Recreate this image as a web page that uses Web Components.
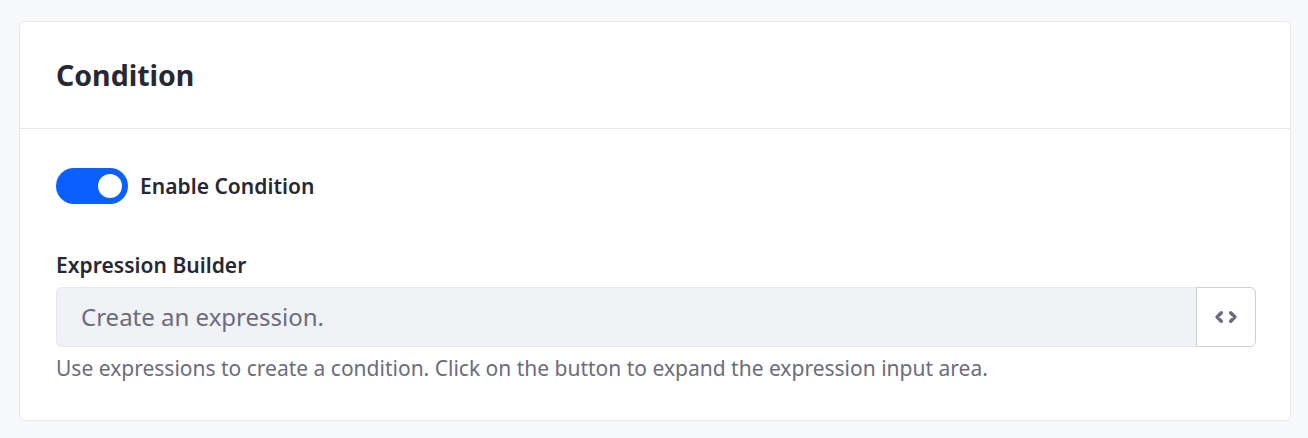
<!DOCTYPE html>
<html lang="en"><head><meta charset="utf-8"><title>Condition</title>
<style>
body{margin:0;background:#f7f8fa;font-family:"Noto Sans","Open Sans",sans-serif;color:#272833;height:438px;overflow:hidden}
</style></head><body>
<condition-panel>
<span slot="title">Condition</span>
<toggle-switch>Enable Condition</toggle-switch>
<expression-field><span slot="label">Expression Builder</span><span slot="placeholder">Create an expression.</span><span slot="help">Use expressions to create a condition. Click on the button to expand the expression input area.</span></expression-field>
</condition-panel>
<script>
const define=(name,markup)=>customElements.define(name,class extends HTMLElement{
constructor(){super();this.attachShadow({mode:"open"}).innerHTML=markup;}
});
define("condition-panel",`<style>
:host{display:block;box-sizing:border-box;padding:21px 17px 0 19px}
section{box-sizing:border-box;height:400px;background:#fff;border:1px solid #e7e7ed;border-radius:6px}
header{box-sizing:border-box;height:107px;padding:0 36px;border-bottom:1px solid #e7e7ed;display:flex;align-items:center}
h2{margin:0;font-size:28.5px;line-height:42px;font-weight:700}
.body{padding:39px 34px 0 36px}
</style><section><header><h2><slot name="title"></slot></h2></header><div class="body"><slot></slot></div></section>`);
define("toggle-switch",`<style>
:host{display:flex;align-items:center;height:36px;gap:12px;font-size:21px;font-weight:600;letter-spacing:.03px}
.track{box-sizing:border-box;width:72px;height:36px;padding:6px;border-radius:18px;background:#0b5fff;display:flex;justify-content:flex-end}
.thumb{width:24px;height:24px;border-radius:50%;background:#fff}
</style><span class="track" role="switch" aria-checked="true"><span class="thumb"></span></span><span><slot></slot></span>`);
define("expression-field",`<style>
:host{display:block;margin-top:45px}
.label{font-size:21px;line-height:32px;font-weight:600;letter-spacing:.03px;margin-bottom:6px}
.group{display:flex;height:60px}
.input{box-sizing:border-box;flex:1;border:1px solid #e7e7ed;border-right:0;border-radius:6px 0 0 6px;background:#f1f2f5;padding:0 0 2px 24px;font-size:24px;color:#6b6c7e;display:flex;align-items:center}
button{box-sizing:border-box;width:60px;margin:0;padding:0;background:#fff;border:1px solid #cdced9;border-radius:0 6px 6px 0;display:flex;align-items:center;justify-content:center;color:#6b6c7e}
.help{margin-top:5px;font-size:21px;line-height:32px;color:#6b6c7e}
</style><div class="label"><slot name="label"></slot></div>
<div class="group"><div class="input"><slot name="placeholder"></slot></div><button aria-label="Expand"><svg width="24" height="24" viewBox="0 0 24 24" fill="none" stroke="currentColor" stroke-width="3.5" stroke-linecap="round" stroke-linejoin="round"><path d="M7.300 7.800 3.100 12l4.200 4.200M16.700 7.800l4.200 4.200-4.200 4.200"/></svg></button></div>
<div class="help"><slot name="help"></slot></div>`);
</script></body></html>
